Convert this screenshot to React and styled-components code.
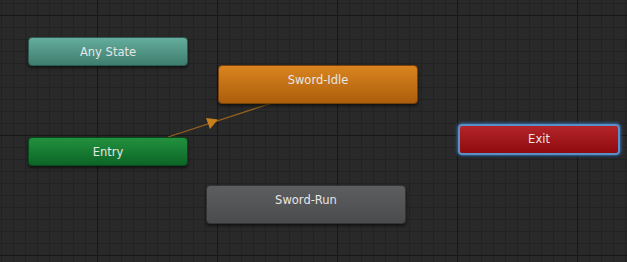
import React from 'react';
import styled, { createGlobalStyle } from 'styled-components';

const Global = createGlobalStyle`
    html, body {
        margin: 0;
        padding: 0;
        background: #282828;
        overflow: hidden;
    }
`;

// graph canvas with Unity-like grid: minor lines every 12px, major every 120px
const Canvas = styled.div`
    position: relative;
    width: 627px;
    height: 262px;
    overflow: hidden;
    background-color: #292929;
    background-image:
        linear-gradient(to right, #171717 1px, transparent 1px),
        linear-gradient(to bottom, #171717 1px, transparent 1px),
        linear-gradient(to right, #222222 1px, transparent 1px),
        linear-gradient(to bottom, #222222 1px, transparent 1px);
    background-size: 120px 120px, 120px 120px, 12px 12px, 12px 12px;
    background-position: 97px 0, 0 15px, 1px 0, 0 3px;
    font-family: "DejaVu Sans", Verdana, sans-serif;
`;

const palette = {
    teal: ['#64ad9c', '#3e7d6e', '#2c5a50'],
    orange: ['#d98420', '#ad5e0c', '#7a4208'],
    green: ['#22913e', '#0c6527', '#064a1b'],
    red: ['#b3252a', '#8f0a0e', '#5e0508'],
    gray: ['#5d5e60', '#4a4b4d', '#333435'],
};

const Node = styled.div`
    position: absolute;
    box-sizing: border-box;
    left: ${p => p.$x}px;
    top: ${p => p.$y}px;
    width: ${p => p.$w}px;
    height: ${p => p.$h}px;
    border-radius: 4px;
    border: 1px solid ${p => palette[p.$tone][2]};
    background: linear-gradient(to bottom, ${p => palette[p.$tone][0]}, ${p => palette[p.$tone][1]});
    box-shadow: 0 2px 3px rgba(0, 0, 0, 0.55);
    color: #e6e6e6;
    font-size: 11.5px;
    line-height: 28px;
    text-align: center;
`;

const SelectedNode = styled(Node)`
    border: 2px solid #5a8fc8;
    box-shadow: 0 0 3px 1px #3c6ea8, 0 2px 3px rgba(0, 0, 0, 0.5);
    line-height: 27px;
`;

const Wires = styled.svg`
    position: absolute;
    left: 0;
    top: 0;
    pointer-events: none;
`;

const App = () => {
    return (
        <>
            <Global />
            <Canvas>
                <Wires width="627" height="262">
                    <line x1="168" y1="137" x2="272" y2="103" stroke="#93601c" strokeWidth="1.3" />
                    <polygon points="218,119.5 206,118 210,129" fill="#c5801c" />
                </Wires>
                <Node $tone="teal" $x={28} $y={37} $w={160} $h={29}>Any State</Node>
                <Node $tone="orange" $x={218} $y={65} $w={200} $h={39}>Sword-Idle</Node>
                <Node $tone="green" $x={28} $y={137} $w={160} $h={29}>Entry</Node>
                <SelectedNode $tone="red" $x={458} $y={124} $w={162} $h={31}>Exit</SelectedNode>
                <Node $tone="gray" $x={206} $y={185} $w={200} $h={39}>Sword-Run</Node>
            </Canvas>
        </>
    );
};

export default App;
